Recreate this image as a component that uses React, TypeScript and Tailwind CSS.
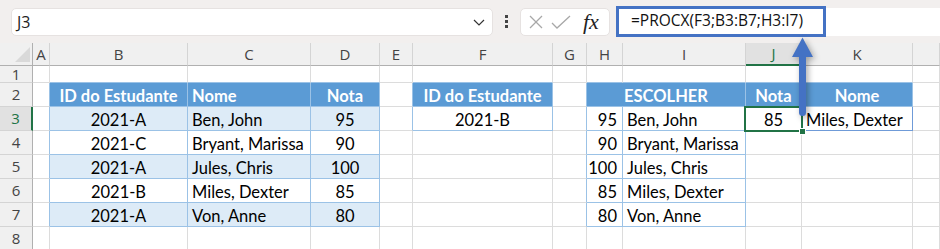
import React from "react";

const COLS = ["", "A", "B", "C", "D", "E", "F", "G", "H", "I", "J", "K", ""];

type Cell = {
  text?: string;
  bg?: "white" | "head" | "band";
  align?: "l" | "c" | "r";
  r?: "g" | "b" | "h" | "d";
  b?: "g" | "b" | "d";
  span?: number;
};

const BG: Record<string, string> = {
  white: "bg-white text-[#000]",
  head: "bg-[#5b9bd5] text-white font-bold",
  band: "bg-[#ddebf7] text-[#000]",
};
const RB: Record<string, string> = {
  g: "border-r-[#dcdcdc]",
  b: "border-r-[#9bc2e6]",
  h: "border-r-[#5b9bd5]",
  d: "border-r-[#6f9bd8]",
};
const BB: Record<string, string> = {
  g: "border-b-[#dcdcdc]",
  b: "border-b-[#9bc2e6]",
  d: "border-b-[#6f9bd8]",
};
const AL: Record<string, string> = {
  l: "justify-start pl-[4px]",
  c: "justify-center",
  r: "justify-end pr-[5px]",
};

const t1 = [
  ["2021-A", "Ben, John", "95"],
  ["2021-C", "Bryant, Marissa", "90"],
  ["2021-A", "Jules, Chris", "100"],
  ["2021-B", "Miles, Dexter", "85"],
  ["2021-A", "Von, Anne", "80"],
];
const t3 = [
  ["95", "Ben, John"],
  ["90", "Bryant, Marissa"],
  ["100", "Jules, Chris"],
  ["85", "Miles, Dexter"],
  ["80", "Von, Anne"],
];

function getCell(row: number, col: number): Cell | null {
  const c: Cell = { bg: "white", align: "l", r: "g", b: "g" };
  if (row === 1 && [2, 3, 4, 6, 8, 9, 10, 11].includes(col)) c.b = "b";
  if (col === 1 && row >= 2 && row <= 7) c.r = "b";
  if (col === 5 && row >= 2 && row <= 3) c.r = "b";
  if (col === 7 && row >= 2 && row <= 7) c.r = "b";

  if (row >= 2 && row <= 7 && col >= 2 && col <= 4) {
    c.r = "b";
    c.b = "b";
    if (row === 2) {
      c.bg = "head";
      c.text = ["ID do Estudante", "Nome", "Nota"][col - 2];
      c.align = col === 3 ? "l" : "c";
    } else {
      const d = t1[row - 3];
      c.text = d[col - 2];
      c.bg = row % 2 === 1 ? "band" : "white";
      c.align = col === 3 ? "l" : "c";
    }
  }
  if (col === 6 && (row === 2 || row === 3)) {
    c.r = "b";
    c.b = "b";
    c.align = "c";
    if (row === 2) {
      c.bg = "head";
      c.text = "ID do Estudante";
    } else c.text = "2021-B";
  }
  if (row === 2 && col === 9) return null;
  if (row >= 2 && row <= 7 && (col === 8 || col === 9)) {
    c.r = "b";
    c.b = "b";
    if (row === 2) {
      c.bg = "head";
      c.text = "ESCOLHER";
      c.align = "c";
      c.span = 2;
    } else {
      c.text = t3[row - 3][col - 8];
      c.align = col === 8 ? "r" : "l";
    }
  }
  if ((row === 2 || row === 3) && (col === 10 || col === 11)) {
    c.r = "b";
    c.b = "b";
    if (row === 2) {
      c.bg = "head";
      c.text = col === 10 ? "Nota" : "Nome";
      c.align = "c";
    } else {
      c.text = col === 10 ? "85" : "Miles, Dexter";
      c.align = col === 10 ? "c" : "l";
      if (col === 11) {
        c.r = "d";
        c.b = "d";
      }
    }
  }
  return c;
}

function FormulaBar() {
  return (
    <div className="h-[43px] bg-[#f2efee] flex items-center relative">
      <div className="ml-[11px] w-[482px] h-[28px] bg-white rounded-[5px] border border-[#e6e2e1] flex items-center justify-between">
        <span className="pl-[5px] text-[16px] text-[#222]" style={{ fontFamily: "'Open Sans', sans-serif" }}>
          J3
        </span>
        <svg width="14" height="10" viewBox="0 0 14 10" className="mr-[6px]">
          <polyline points="2,3 7,8 12,3" fill="none" stroke="#333" strokeWidth="1.2" />
        </svg>
      </div>
      <div className="w-[27px] flex flex-col items-center gap-[2px]">
        <div className="w-[3px] h-[3px] bg-[#444]" />
        <div className="w-[3px] h-[3px] bg-[#444]" />
        <div className="w-[3px] h-[3px] bg-[#444]" />
      </div>
      <div className="w-[90px] h-[28px] bg-white rounded-[5px] border border-[#e6e2e1] flex items-center">
        <svg width="16" height="16" viewBox="0 0 16 16" className="ml-[7px]">
          <line x1="2" y1="2" x2="14" y2="14" stroke="#a8a8a8" strokeWidth="1.3" />
          <line x1="14" y1="2" x2="2" y2="14" stroke="#a8a8a8" strokeWidth="1.3" />
        </svg>
        <svg width="22" height="16" viewBox="0 0 22 16" className="ml-[6px]">
          <polyline points="2,9 7,14 20,2" fill="none" stroke="#a8a8a8" strokeWidth="1.3" />
        </svg>
        <span
          className="ml-[11px] text-[22px] italic text-[#222] leading-none"
          style={{ fontFamily: "'Liberation Serif', serif" }}
        >
          fx
        </span>
      </div>
      <div className="ml-[6px] flex-1 h-[28px] bg-white rounded-l-[5px] relative">
        <div className="absolute left-0 top-[-2px] w-[210px] h-[31px] border-[3px] border-[#4472c4] flex items-center">
          <span className="pl-[12px] text-[15.5px] text-[#111]" style={{ fontFamily: "'Open Sans', sans-serif" }}>
            =PROCX(F3;B3:B7;H3:I7)
          </span>
        </div>
      </div>
    </div>
  );
}

export default function App() {
  const rows = [1, 2, 3, 4, 5, 6, 7, 8];
  return (
    <div className="w-[940px] h-[249px] overflow-hidden relative bg-white">
      <FormulaBar />
      <div className="grid grid-cols-[33px_17px_138px_123px_69px_33px_140px_34px_36px_123px_56px_111px_27px] grid-rows-[23px_17px_24px_24px_24px_24px_24px_24px_24px]">
        <div className="bg-[#f0f0f0] border-r border-b border-r-[#b0b0b0] border-b-[#b0b0b0] relative">
          <svg width="33" height="23" className="absolute left-0 top-0">
            <polygon points="30,4 30,19 15,19" fill="#d9d9d9" />
          </svg>
        </div>
        {COLS.slice(1).map((l, i) =>
          l === "J" ? (
            <div
              key={i}
              className="bg-[#e1e1e1] border-r border-r-[#d4d4d4] border-b-2 border-b-[#217346] flex items-center justify-center text-[15px] text-[#217346]"
              style={{ fontFamily: "'Open Sans', sans-serif" }}
            >
              {l}
            </div>
          ) : (
            <div
              key={i}
              className="bg-[#f0f0f0] border-r border-b border-r-[#d4d4d4] border-b-[#b0b0b0] flex items-center justify-center text-[15px] text-[#444]"
              style={{ fontFamily: "'Open Sans', sans-serif" }}
            >
              {l}
            </div>
          )
        )}
        {rows.map((row) => (
          <React.Fragment key={row}>
            {row === 3 ? (
              <div
                className="bg-[#e1e1e1] border-r-2 border-b border-r-[#217346] border-b-[#d4d4d4] flex items-center justify-center text-[15px] text-[#217346]"
                style={{ fontFamily: "'Open Sans', sans-serif" }}
              >
                {row}
              </div>
            ) : (
              <div
                className="bg-[#f0f0f0] border-r border-b border-r-[#b0b0b0] border-b-[#d4d4d4] flex items-center justify-center text-[15px] text-[#444]"
                style={{ fontFamily: "'Open Sans', sans-serif" }}
              >
                {row}
              </div>
            )}
            {Array.from({ length: 12 }, (_, k) => k + 1).map((col) => {
              const c = getCell(row, col);
              if (!c) return null;
              return (
                <div
                  key={col}
                  className={`${BG[c.bg!]} ${RB[c.r!]} ${BB[c.b!]} ${AL[c.align!]} ${
                    c.span === 2 ? "col-span-2" : ""
                  } border-r border-b flex items-end text-[16.5px] leading-[19px] whitespace-nowrap overflow-hidden`}
                  style={{ fontFamily: "Lato, 'Liberation Sans', sans-serif" }}
                >
                  {c.text}
                </div>
              );
            })}
          </React.Fragment>
        ))}
      </div>
      <div className="absolute left-[744px] top-[106px] w-[59px] h-[26px] border-2 border-[#217346]" />
      <div className="absolute left-[799px] top-[128px] w-[7px] h-[7px] bg-[#217346] border border-white" />
      <svg
        width="40"
        height="96"
        viewBox="0 0 40 96"
        className="absolute left-[782px] top-[32px]"
        style={{ filter: "drop-shadow(2px 2px 3px rgba(0,0,0,0.35))" }}
      >
        <rect x="17" y="20" width="7" height="64" rx="3.5" fill="#4472c4" />
        <polygon points="20.5,5.5 31,25 10,25" fill="#4472c4" />
      </svg>
    </div>
  );
}
